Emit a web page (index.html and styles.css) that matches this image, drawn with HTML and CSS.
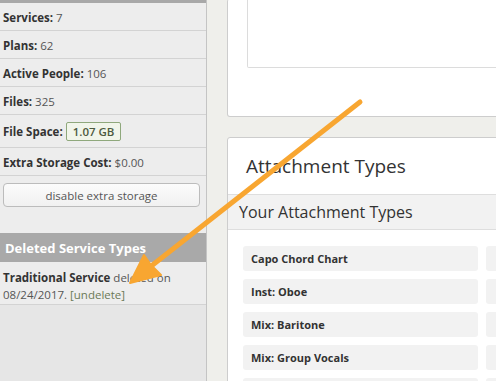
FILE: index.html
```html
<!DOCTYPE html>
<html lang="en">
<head>
    <meta charset="UTF-8">
    <title>Account - Attachment Types</title>
    <link rel="stylesheet" href="styles.css">
</head>
<body>
    <div class="page">
        <aside class="sidebar">
            <div class="sidebar-top"></div>
            <div class="stat"><b>Services:</b>&nbsp;7</div>
            <div class="stat"><b>Plans:</b>&nbsp;62</div>
            <div class="stat"><b>Active People:</b>&nbsp;106</div>
            <div class="stat"><b>Files:</b>&nbsp;325</div>
            <div class="stat stat-tall"><b>File Space:</b>&nbsp;<span class="badge">1.07 GB</span></div>
            <div class="stat"><b>Extra Storage Cost:</b>&nbsp;$0.00</div>
            <div class="button-row">
                <button type="button" class="plain-button">disable extra storage</button>
            </div>

            <h3 class="side-heading">Deleted Service Types</h3>
            <div class="deleted-row">
                <p><b>Traditional Service</b> deleted on</p>
                <p>08/24/2017. <a href="#" class="undelete">[undelete]</a></p>
            </div>
            <div class="sidebar-rest"></div>
        </aside>

        <main class="main">
            <section class="card card-top">
                <div class="inner-box"></div>
            </section>

            <section class="card card-types">
                <h2>Attachment Types</h2>
                <div class="subhead">Your Attachment Types</div>
                <div class="type-grid">
                    <div class="type-item">Capo Chord Chart</div>
                    <div class="type-item"></div>
                    <div class="type-item">Inst: Oboe</div>
                    <div class="type-item"></div>
                    <div class="type-item">Mix: Baritone</div>
                    <div class="type-item"></div>
                    <div class="type-item">Mix: Group Vocals</div>
                    <div class="type-item"></div>
                    <div class="type-item"></div>
                    <div class="type-item"></div>
                </div>
            </section>
        </main>
    </div>

    <!-- annotation arrow drawn over the screenshot -->
    <svg class="arrow" width="496" height="381" viewBox="0 0 496 381">
        <line x1="360" y1="102" x2="150" y2="267" stroke="#f8a631" stroke-width="5" stroke-linecap="round"/>
        <path d="M130 283 L144 255 L151 265 L161 275 Z" fill="#f8a631" stroke="#f8a631" stroke-width="2" stroke-linejoin="round"/>
    </svg>
</body>
</html>
```

FILE: styles.css
```css
* {
    margin: 0;
    padding: 0;
    box-sizing: border-box;
}

body {
    font-family: 'Open Sans', 'DejaVu Sans', sans-serif;
    background: #efefeb;
    color: #333;
    overflow: hidden;
    width: 496px;
    height: 381px;
}

.page {
    display: flex;
    width: 800px;
    height: 381px;
}

/* left column */
.sidebar {
    width: 207px;
    flex-shrink: 0;
    background: #e7e7e7;
    border-right: 1px solid #c4c4c4;
    display: flex;
    flex-direction: column;
    font-size: 11.5px;
}

.sidebar-top {
    height: 3px;
    background: #a8a8a8;
}

.stat {
    height: 28px;
    display: flex;
    align-items: center;
    padding: 1px 3px 0;
    background: #ededed;
    border-bottom: 1px solid #d3d3d3;
    color: #555;
}

.stat b {
    color: #333;
}

.stat-tall {
    height: 33px;
}

.badge {
    display: inline-block;
    padding: 1px 6px;
    border: 1px solid #8fa87c;
    border-radius: 2px;
    background: #f1f5ea;
    color: #4d5a40;
    font-weight: 600;
}

.button-row {
    background: #ededed;
    padding: 7px 6px 26px 3px;
}

.plain-button {
    width: 197px;
    height: 24px;
    font-family: inherit;
    font-size: 11.5px;
    color: #555;
    background: linear-gradient(#fcfcfc, #f1f1f1);
    border: 1px solid #bcbcbc;
    border-radius: 4px;
}

.side-heading {
    height: 29px;
    display: flex;
    align-items: center;
    padding: 0 5px;
    background: #a9a9a9;
    color: #fff;
    font-size: 13px;
    font-weight: 700;
}

.deleted-row {
    height: 43px;
    padding: 7px 3px 0;
    background: #ededed;
    border-bottom: 1px solid #d3d3d3;
    color: #555;
    line-height: 17px;
}

.deleted-row b {
    color: #333;
}

.undelete {
    color: #6b7a57;
    text-decoration: none;
}

.sidebar-rest {
    flex: 1;
    background: #e6e6e6;
}

/* right column */
.main {
    flex: 1;
    padding-left: 20px;
    display: flex;
    flex-direction: column;
    gap: 20px;
}

.card {
    flex-shrink: 0;
    background: #fff;
    border: 1px solid #cdcdcd;
    border-radius: 3px;
}

.card-top {
    height: 118px;
    margin-top: -1px;
    border-top: none;
    padding: 0 0 0 19px;
}

.inner-box {
    height: 69px;
    border: 1px solid #dcdcdc;
    border-top: none;
    border-radius: 0 0 2px 2px;
}

.card-types h2 {
    font-size: 19px;
    font-weight: 400;
    color: #333;
    padding: 15px 18px 0;
    height: 56px;
}

.subhead {
    height: 36px;
    display: flex;
    align-items: center;
    padding: 0 11px;
    background: #f2f2f2;
    border-top: 1px solid #dedede;
    border-bottom: 1px solid #dedede;
    font-size: 16px;
    color: #333;
}

.type-grid {
    display: grid;
    grid-template-columns: 235px 235px;
    gap: 8px;
    padding: 16px 15px;
}

.type-item {
    height: 25px;
    display: flex;
    align-items: center;
    padding: 0 8px;
    background: #f2f2f2;
    border-radius: 3px;
    font-size: 11px;
    font-weight: 700;
    color: #333;
}

.arrow {
    position: absolute;
    left: 0;
    top: 0;
}
```
